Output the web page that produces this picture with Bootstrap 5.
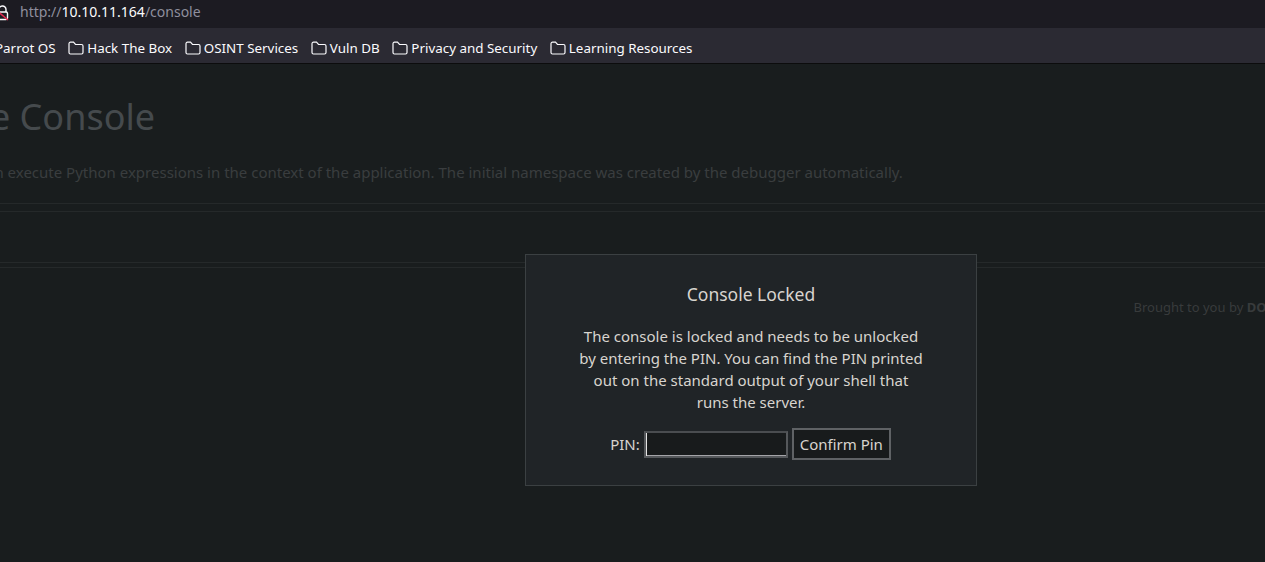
<!DOCTYPE html>
<html lang="en">
<head>
<meta charset="utf-8">
<title>Console</title>
<link href="https://cdn.jsdelivr.net/npm/bootstrap@5.3.0/dist/css/bootstrap.min.css" rel="stylesheet">
<style>
html,body{height:100%}
body{background:#191d1e;font-family:"Noto Sans",sans-serif;overflow:hidden;position:relative;color:#d8d4cf}
.urlbar{height:28px;background:#1c1b22;padding-left:20px;font-size:14px;line-height:24px;color:#8f8f9d}
.urlbar b{font-weight:400;color:#fbfbfe}
.lockico{position:absolute;left:-6px;top:4px}
.bookbar{height:36px;padding-top:5px;background:#2b2a33;border-bottom:1px solid #0c0c0d;font-size:13.4px;color:#fbfbfe;white-space:nowrap;margin-left:-24px;gap:12.6px}
.bookitem{gap:3px}
.dimpage{height:498px;overflow:hidden;white-space:nowrap}
.ghost-title{font-size:36px;font-weight:400;line-height:45px;color:#454a4d;margin:30px 0 0 -170px}
.ghost-text{font-size:15px;line-height:20px;color:#3a3d3f;margin:23px 0 0 -157px}
.rule-a{border-top:1px solid #25292a;height:8px;margin-top:21px}
.rule-b{border-top:1px solid #25292a;height:51px}
.rule-c{border-top:1px solid #25292a;height:5px}
.rule-d{border-top:1px solid #25292a}
.ghost-foot{font-size:13px;line-height:18px;color:#383b3c;margin-top:30px;margin-right:-67px}
.ghost-foot strong{font-weight:700}
.pinbox{position:absolute;left:525px;top:254px;width:452px;height:232px;background:#202427;border:1px solid #3b4042;color:#d8d4cf;text-align:center;padding-top:26px}
.pinbox h2{font-size:17.5px;line-height:26px;font-weight:400;margin:0 0 18px;color:#d8d4cf}
.pinbox p{font-size:15px;line-height:22px;margin:0 auto 15px;width:347px}
.pinrow{gap:5px;font-size:15px;padding-right:1px}
.pinrow label{margin-right:-1px}
.pininput{width:144px;height:27px;background:#181b1c;border:2px solid #55585b;border-top-color:#4a4d50;padding:0;box-shadow:inset 1px 0 0 #e4e4e4,inset 0 -1px 0 #a4a4a8}
.pinbtn{height:32px;width:99px;margin-left:-1px;padding:0;background:#181b1c;color:#d8d4cf;border:2px solid #5f6265;border-radius:0;font-size:15px;line-height:1}
.pinbtn:hover{background:#181b1c;color:#d8d4cf;border-color:#5f6265}
</style>
</head>
<body>
<div class="urlbar position-relative">
<svg class="lockico" width="18" height="18" viewBox="0 0 18 18" fill="none"><path d="M5 8V5.500a3.500 3.500 0 0 1 7 0V8" stroke="#fbfbfe" stroke-width="1.400"/><rect x="3.500" y="8" width="10" height="7.500" rx="1.500" stroke="#fbfbfe" stroke-width="1.400"/><path d="M1 5l13 11" stroke="#e22850" stroke-width="1.600"/></svg>
http://<b>10.10.11.164</b>/console</div>
<div class="bookbar d-flex align-items-center">
<span class="bookitem d-flex align-items-center">
<svg width="16" height="14" viewBox="0 0 16 14" fill="none"><path d="M1 3v8.500A1.500 1.500 0 0 0 2.500 13h11a1.500 1.500 0 0 0 1.500-1.500V5A1.500 1.500 0 0 0 13.500 3.500H7.500L5.500 1.200H2.500A1.500 1.500 0 0 0 1 2.700z" stroke="#fbfbfe" stroke-width="1.200"/></svg>Parrot OS</span>
<span class="bookitem d-flex align-items-center">
<svg width="16" height="14" viewBox="0 0 16 14" fill="none"><path d="M1 3v8.500A1.500 1.500 0 0 0 2.500 13h11a1.500 1.500 0 0 0 1.500-1.500V5A1.500 1.500 0 0 0 13.500 3.500H7.500L5.500 1.200H2.500A1.500 1.500 0 0 0 1 2.700z" stroke="#fbfbfe" stroke-width="1.200"/></svg>Hack The Box</span>
<span class="bookitem d-flex align-items-center">
<svg width="16" height="14" viewBox="0 0 16 14" fill="none"><path d="M1 3v8.500A1.500 1.500 0 0 0 2.500 13h11a1.500 1.500 0 0 0 1.500-1.500V5A1.500 1.500 0 0 0 13.500 3.500H7.500L5.500 1.200H2.500A1.500 1.500 0 0 0 1 2.700z" stroke="#fbfbfe" stroke-width="1.200"/></svg>OSINT Services</span>
<span class="bookitem d-flex align-items-center">
<svg width="16" height="14" viewBox="0 0 16 14" fill="none"><path d="M1 3v8.500A1.500 1.500 0 0 0 2.500 13h11a1.500 1.500 0 0 0 1.500-1.500V5A1.500 1.500 0 0 0 13.500 3.500H7.500L5.500 1.200H2.500A1.500 1.500 0 0 0 1 2.700z" stroke="#fbfbfe" stroke-width="1.200"/></svg>Vuln DB</span>
<span class="bookitem d-flex align-items-center">
<svg width="16" height="14" viewBox="0 0 16 14" fill="none"><path d="M1 3v8.500A1.500 1.500 0 0 0 2.500 13h11a1.500 1.500 0 0 0 1.500-1.500V5A1.500 1.500 0 0 0 13.500 3.500H7.500L5.500 1.200H2.500A1.500 1.500 0 0 0 1 2.700z" stroke="#fbfbfe" stroke-width="1.200"/></svg>Privacy and Security</span>
<span class="bookitem d-flex align-items-center">
<svg width="16" height="14" viewBox="0 0 16 14" fill="none"><path d="M1 3v8.500A1.500 1.500 0 0 0 2.500 13h11a1.500 1.500 0 0 0 1.500-1.500V5A1.500 1.500 0 0 0 13.500 3.500H7.500L5.500 1.200H2.500A1.500 1.500 0 0 0 1 2.700z" stroke="#fbfbfe" stroke-width="1.200"/></svg>Learning Resources</span>
</div>
<div class="dimpage">
<h1 class="ghost-title">Interactive Console</h1>
<p class="ghost-text">In this console you can execute Python expressions in the context of the application. The initial namespace was created by the debugger automatically.</p>
<div class="rule-a"></div>
<div class="rule-b"></div>
<div class="rule-c"></div>
<div class="rule-d"></div>
<div class="ghost-foot text-end">Brought to you by <strong>DON'T PANIC</strong></div>
</div>
<div class="pinbox">
<h2>Console Locked</h2>
<p>The console is locked and needs to be unlocked by entering the PIN. You can find the PIN printed out on the standard output of your shell that runs the server.</p>
<form class="pinrow d-flex justify-content-center align-items-center" onsubmit="return false">
<label for="pin">PIN:</label>
<input id="pin" class="pininput" type="text">
<button class="btn pinbtn" type="button">Confirm Pin</button>
</form>
</div>
<script src="https://cdn.jsdelivr.net/npm/bootstrap@5.3.0/dist/js/bootstrap.bundle.min.js"></script>
</body>
</html>
